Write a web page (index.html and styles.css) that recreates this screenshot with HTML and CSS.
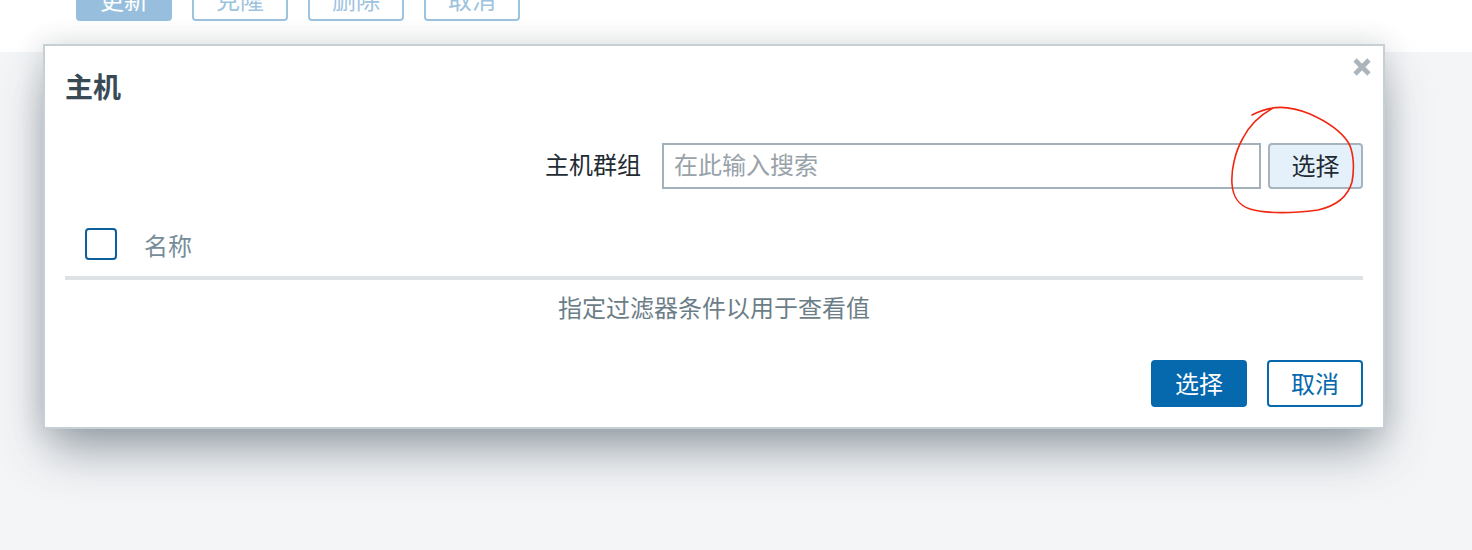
FILE: index.html
```html
<!doctype html>
<html lang="zh-CN">
<head>
<meta charset="utf-8" />
<meta name="viewport" content="width=device-width" />
<title>主机</title>
<link rel="stylesheet" href="styles.css">
</head>
<body>
<!-- form buttons of the page behind the dialog, scrolled half out of view -->
<div class="page-top">
	<button class="btn-back filled">更新</button>
	<button class="btn-back">克隆</button>
	<button class="btn-back">删除</button>
	<button class="btn-back">取消</button>
</div>

<div class="overlay-dialog">
	<button class="close" title="关闭">
		<svg width="18" height="18" viewBox="0 0 18 18"><path d="M2 2 L16 16 M16 2 L2 16" stroke="#abb5bb" stroke-width="4.6" fill="none"/></svg>
	</button>
	<h4 class="dialog-title">主机</h4>

	<div class="filter-row">
		<label for="groups" class="filter-label">主机群组</label>
		<input id="groups" class="filter-input" type="text" placeholder="在此输入搜索" />
		<button class="btn-grey">选择</button>
	</div>

	<table class="list-table">
		<thead>
			<tr>
				<th class="cell-check"><span class="checkbox"></span></th>
				<th>名称</th>
			</tr>
		</thead>
		<tbody>
			<tr>
				<td colspan="2" class="no-data">指定过滤器条件以用于查看值</td>
			</tr>
		</tbody>
	</table>

	<div class="dialog-footer">
		<button class="btn-primary">选择</button>
		<button class="btn-alt">取消</button>
	</div>
</div>

<!-- red pen mark drawn over the screenshot -->
<svg class="pen-mark" width="140" height="120" viewBox="1225 100 140 120">
	<path d="M1252 115 C1260 111 1266 109 1273 108 C1262 114 1250 124 1243 138 C1235 152 1231 170 1232 184 C1233 197 1238 205 1250 209 C1268 214 1295 213 1318 210 C1336 206 1348 196 1352 182 C1355 166 1353 150 1348 142 C1340 130 1328 122 1310 114 C1298 109 1285 106 1272 108"
		stroke="#f0260f" stroke-width="1.6" fill="none" stroke-linecap="round"/>
</svg>
</body>
</html>
```

FILE: styles.css
```css
body {
	margin: 0;
	background-color: #f4f5f7;
	font-family: "Noto Sans CJK SC", "Noto Sans", sans-serif;
	font-size: 24px;
	color: #1f2c33;
	height: 550px;
	overflow: hidden;
}
button {
	font-family: inherit;
	font-size: 24px;
	cursor: pointer;
}
.page-top {
	background-color: #ffffff;
	height: 52px;
	padding-left: 76px;
	display: flex;
	gap: 20px;
	align-items: flex-start;
}
.btn-back {
	margin-top: -25px;
	width: 96px;
	height: 46px;
	border: 2px solid #9ec3df;
	border-radius: 4px;
	background-color: #ffffff;
	color: #9ec3df;
	padding: 0;
}
.btn-back.filled {
	background-color: #97bfdd;
	border-color: #97bfdd;
	color: #ffffff;
}
.overlay-dialog {
	position: absolute;
	left: 43px;
	top: 44px;
	width: 1298px;
	padding: 0 20px 20px 20px;
	background-color: #ffffff;
	border: 2px solid #c6cfd4;
	box-shadow: 0 0 26px rgba(40, 55, 65, 0.14), 0 26px 46px -6px rgba(40, 60, 75, 0.45);
}
.close {
	position: absolute;
	right: 12px;
	top: 12px;
	border: none;
	background: none;
	padding: 0;
	width: 18px;
	height: 18px;
}
.close svg {
	display: block;
}
.dialog-title {
	margin: 22px 0 0 0;
	padding-bottom: 2px;
	font-size: 28px;
	line-height: 36px;
	font-weight: bold;
	color: #384a55;
}
.filter-row {
	margin-top: 37px;
	display: flex;
	justify-content: flex-end;
	align-items: center;
	height: 46px;
}
.filter-label {
	margin-right: 21px;
	padding-bottom: 5px;
	color: #1f2c33;
}
.filter-input {
	box-sizing: border-box;
	width: 599px;
	height: 46px;
	border: 2px solid #a3b1ba;
	padding: 0 10px 5px 10px;
	font-family: inherit;
	font-size: 24px;
	color: #1f2c33;
	outline: none;
}
.filter-input::placeholder {
	color: #98a2a9;
}
.btn-grey {
	margin-left: 7px;
	box-sizing: border-box;
	width: 95px;
	height: 46px;
	padding: 0 0 3px 0;
	border: 2px solid #a6b4bd;
	border-radius: 4px;
	background-color: #e4f0fa;
	color: #1f2c33;
}
.list-table {
	margin-top: 25px;
	width: 100%;
	border-collapse: collapse;
}
.list-table th {
	height: 60px;
	padding: 0 0 2px 0;
	text-align: left;
	font-weight: normal;
	color: #768d99;
	border-bottom: 4px solid #dce2e5;
	vertical-align: middle;
}
.cell-check {
	width: 59px;
	padding-left: 20px !important;
}
.checkbox {
	display: block;
	box-sizing: border-box;
	width: 32px;
	height: 32px;
	border: 2px solid #0c5e9d;
	border-radius: 4px;
}
.no-data {
	height: 53px;
	padding: 0 0 5px 0;
	text-align: center;
	color: #6b7e88;
}
.dialog-footer {
	margin-top: 22px;
	display: flex;
	justify-content: flex-end;
	gap: 20px;
}
.btn-primary, .btn-alt {
	box-sizing: border-box;
	width: 96px;
	height: 47px;
	padding: 0 0 2px 0;
	border-radius: 4px;
	border: 2px solid #0668ad;
}
.btn-primary {
	background-color: #0668ad;
	color: #ffffff;
}
.btn-alt {
	background-color: #ffffff;
	color: #0668ad;
}
.pen-mark {
	position: absolute;
	left: 1225px;
	top: 100px;
}
```
